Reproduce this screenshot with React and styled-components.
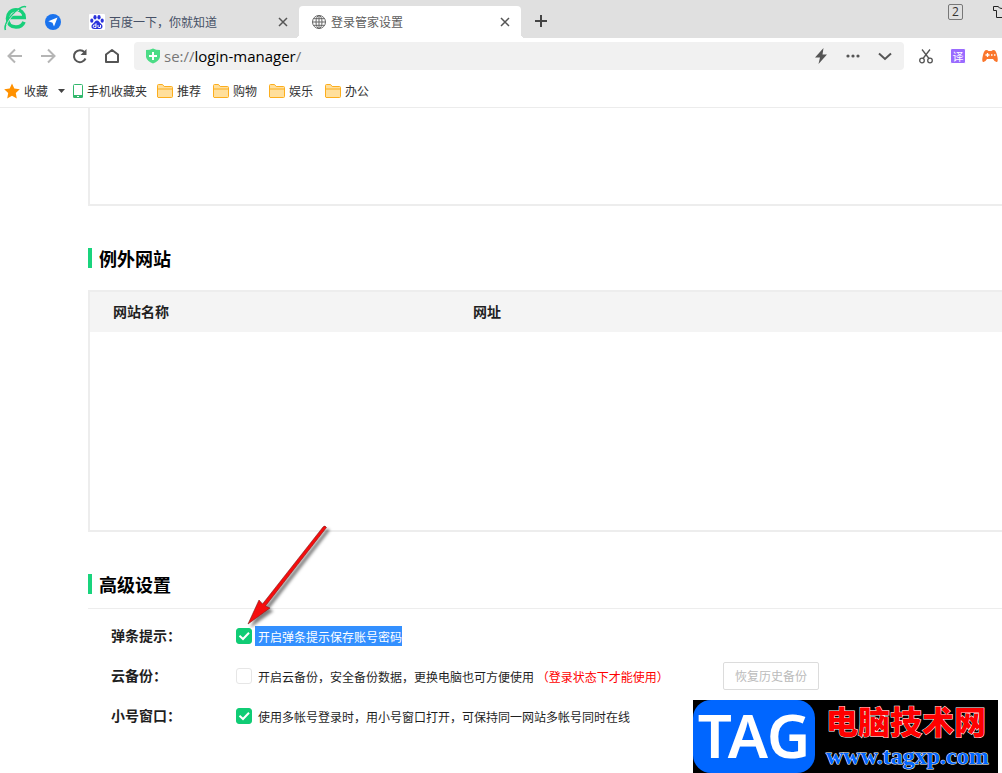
import React from "react";
import styled, { createGlobalStyle, css } from "styled-components";

const GlobalStyle = createGlobalStyle`
  * { box-sizing: border-box; }
  body {
    margin: 0;
    background: #fff;
    color: #1f1f1f;
    font: 12px/20px "Noto Sans CJK SC", sans-serif;
  }
  button, input { font: inherit; margin: 0; }
`;

const Page = styled.div`
  position: relative;
  display: flex;
  flex-direction: column;
  min-height: 100vh;
  overflow: hidden;
`;

/* Tab strip */
const TabStrip = styled.header`
  display: flex;
  align-items: flex-end;
  height: 38px;
  background: #e0e0e0;
`;

const Brand = styled.div`
  display: flex;
  flex: none;
  align-items: center;
  gap: 17px;
  width: 77px;
  height: 33px;
  padding-left: 4px;
  svg:first-child { align-self: flex-start; }
`;

const Tab = styled.div`
  position: relative;
  display: flex;
  align-items: center;
  flex: 0 1 222px;
  min-width: 0;
  height: 32px;
  padding: 0 8px 0 12px;
  color: #465066;
  ${(p) =>
    p.$active &&
    css`
      background: #fff;
      color: #5c5c5c;
      border-radius: 4px 4px 0 0;
      &::before,
      &::after {
        content: "";
        position: absolute;
        bottom: 0;
        width: 4px;
        height: 4px;
      }
      &::before {
        right: 100%;
        background: radial-gradient(circle at 0 0, #e0e0e0 4px, #fff 4px);
      }
      &::after {
        left: 100%;
        background: radial-gradient(circle at 100% 0, #e0e0e0 4px, #fff 4px);
      }
    `}
`;

const TabTitle = styled.span`
  flex: 1;
  padding-left: 4px;
  overflow: hidden;
  white-space: nowrap;
`;

const IconButton = styled.button`
  display: grid;
  place-items: center;
  flex: none;
  width: ${(p) => p.$width || 16}px;
  height: ${(p) => p.$height || 16}px;
  padding: 0;
  border: 0;
  background: none;
  color: ${(p) => p.$color || "#555"};
`;

const StripActions = styled.div`
  display: flex;
  align-self: flex-start;
  flex: none;
  gap: 30px;
  margin-left: auto;
  padding-top: 4px;
`;

const WindowCount = styled.button`
  width: 15px;
  height: 16px;
  padding: 0;
  border: 1px solid #777;
  border-radius: 2px;
  background: none;
  color: #333;
  font: 12px/14px "Open Sans", sans-serif;
`;

/* Address row */
const Toolbar = styled.nav`
  display: flex;
  align-items: center;
  height: 36px;
  padding-right: 4px;
`;

const NavButtons = styled.div`
  display: flex;
  gap: 16px;
  padding-left: 7px;
  margin-right: 14px;
`;

const AddressBar = styled.div`
  display: flex;
  flex: 1;
  align-items: center;
  min-width: 0;
  height: 28px;
  padding: 0 11px;
  border-radius: 4px;
  background: #f1f1f1;
  font: 15px/20px "Open Sans", sans-serif;
  color: #777;
`;

const Address = styled.div`
  display: flex;
  flex: 1;
  min-width: 0;
  padding-left: 3px;
`;

const AddressInput = styled.input`
  field-sizing: content;
  padding: 0;
  border: 0;
  outline: 0;
  background: none;
  color: #000;
`;

const AddressActions = styled.div`
  display: flex;
  gap: 16px;
`;

const Extensions = styled.div`
  display: flex;
  gap: 16px;
  padding-left: 14px;
`;

const Translate = styled.button`
  width: 16px;
  height: 16px;
  padding: 0;
  border: 1px solid #fff;
  border-radius: 2px;
  background: #9a6bff;
  color: #fff;
  font-size: 11px;
  line-height: 14px;
`;

/* Bookmarks */
const Bookmarks = styled.nav`
  display: flex;
  align-items: center;
  height: 34px;
  padding: 0 4px;
  border-bottom: 1px solid #ececec;
`;

const Bookmark = styled.a`
  display: flex;
  align-items: center;
  flex: none;
  gap: 4px;
  margin-right: ${(p) => p.$after || 12}px;
  color: #333;
  text-decoration: none;
`;

/* Settings page */
const Content = styled.main`
  flex: 1;
  padding-left: 88px;
`;

const Panel = styled.section`
  min-height: ${(p) => p.$height}px;
  border: solid #ededed;
  border-width: ${(p) => (p.$continued ? "0 0 2px 2px" : "2px 0 2px 2px")};
`;

const Heading = styled.h2`
  margin: 42px 0 ${(p) => p.$after}px;
  padding-left: 7px;
  border-left: 4px solid #19d47d;
  color: #000;
  font-size: 18px;
  line-height: 20px;
  font-weight: 700;
`;

const SiteTable = styled.table`
  width: 100%;
  table-layout: fixed;
  border-collapse: collapse;
`;

const HeadCell = styled.th`
  width: ${(p) => p.$width};
  height: 40px;
  padding: 0 0 2px 23px;
  background: #f4f4f4;
  font-size: 14px;
  font-weight: 700;
  text-align: left;
`;

const Options = styled.section`
  padding: 7px 0 37px 23px;
  border-top: 1px solid #ededed;
`;

const OptionRow = styled.div`
  display: flex;
  align-items: center;
  height: 40px;
`;

const OptionName = styled.span`
  flex: none;
  width: 125px;
  padding-bottom: 2px;
  font-size: 14px;
  font-weight: 700;
`;

const OptionLabel = styled.label`
  display: flex;
  align-items: center;
  flex: none;
  gap: 3px;
  width: 487px;
`;

const CheckBox = styled.span`
  position: relative;
  display: grid;
  flex: none;
  svg { grid-area: 1 / 1; pointer-events: none; }
`;

const CheckInput = styled.input`
  grid-area: 1 / 1;
  appearance: none;
  width: 16px;
  height: 16px;
  border: 1px solid #e6e6e6;
  border-radius: 3px;
  background: #fff;
  &:checked { background: #10cc75; border-color: #10cc75; }
  &:not(:checked) + svg { display: none; }
`;

const OptionText = styled.span`
  height: 20px;
  padding-left: 3px;
  line-height: 22px;
  white-space: pre;
  ${(p) => p.$selected && "background: #3390ff; color: #fff;"}
`;

const Warning = styled.span`
  color: #f00;
`;

const RestoreButton = styled.button`
  flex: none;
  width: 96px;
  height: 28px;
  padding: 0;
  border: 1px solid #dcdcdc;
  border-radius: 2px;
  background: #fff;
  color: #bbb;
`;

const Pointer = styled.svg`
  position: absolute;
  left: 8px;
  bottom: 16px;
`;

/* Site badge laid over the corner of the page */
const Badge = styled.aside`
  position: absolute;
  right: 4px;
  bottom: 0;
  display: flex;
  width: 305px;
  height: 73px;
  background: #000;
`;

const BadgeMark = styled.div`
  display: flex;
  align-items: center;
  justify-content: center;
  width: 122px;
  padding-bottom: 4px;
  border-radius: 18px;
  background: #06f;
  color: #fff;
  font: 600 60px/60px "Noto Sans", sans-serif;
`;

const BadgeText = styled.div`
  display: flex;
  flex-direction: column;
  padding-left: 11px;
  white-space: nowrap;
  paint-order: stroke fill;
  -webkit-text-stroke: 1px #fff;
`;

const BadgeTitle = styled.span`
  color: #f00;
  font-size: 32px;
  line-height: 40px;
  font-weight: 900;
`;

const BadgeUrl = styled.span`
  color: #06f;
  font: 700 24px/32px "Liberation Serif", serif;
`;

const Line = ({ children, size = 16, width = 2, ...rest }) => (
  <svg width={size} height={size} viewBox="0 0 16 16" fill="none" stroke="currentColor" strokeWidth={width} {...rest}>
    {children}
  </svg>
);

const BrowserLogo = () => (
  <svg width="24" height="26" viewBox="0 0 24 26" fill="none">
    <path d="M6 12.500H20.200C20 7.500 16.500 4.800 12 4.800 7 4.800 3.500 8.500 3.500 13.500 3.500 18.500 7 22 12 22 15.800 22 18.800 20 20 16.800" stroke="#17cf7a" strokeWidth="3.600" />
    <path d="M1.500 25C0 22 2.500 15.500 8.500 9.500 14 4 19.500 .5 22 2" stroke="#17cf7a" strokeWidth="1.600" />
    <path d="M2.500 20C5 14 9 9.500 15 5" stroke="#e0e0e0" strokeWidth=".9" />
  </svg>
);

const PlaneLogo = () => (
  <svg width="16" height="16" viewBox="0 0 16 16">
    <circle cx="8" cy="8" r="8" fill="#1a73ee" />
    <path d="M12.500 3.500 9 12.500 7.500 8.700 3.300 7.200Z" fill="#fff" />
  </svg>
);

const PawLogo = () => (
  <svg width="16" height="16" viewBox="0 0 16 16">
    <rect width="16" height="16" rx="1" fill="#fff" />
    <g fill="#2a32dc">
      <ellipse cx="2.800" cy="6.700" rx="1.600" ry="2.100" />
      <ellipse cx="6" cy="3.200" rx="1.600" ry="2.200" />
      <ellipse cx="10" cy="3.200" rx="1.600" ry="2.200" />
      <ellipse cx="13.200" cy="6.700" rx="1.600" ry="2.100" />
      <path d="M8 6.500C10 6.500 10.500 8.700 12.300 10 14.500 11.800 13.500 15 11 15H5C2.500 15 1.500 11.800 3.700 10 5.500 8.700 6 6.500 8 6.500Z" />
    </g>
    <path d="M7 9.300V13.500H5.500A1 1 0 0 1 5.500 11H7M9 11V12.700Q9 13.500 10 13.500H11.500V11" fill="none" stroke="#fff" />
  </svg>
);

const GlobeIcon = () => (
  <Line width={1} color="#666">
    <circle cx="8" cy="8" r="6.500" />
    <ellipse cx="8" cy="8" rx="3" ry="6.500" />
    <path d="M8 1.500V14.500M1.500 8H14.500M2.500 4.700H13.500M2.500 11.300H13.500" />
  </Line>
);

const CloseIcon = () => (
  <Line width={1.5}>
    <path d="M4 4 12 12M12 4 4 12" />
  </Line>
);

const StarIcon = () => (
  <svg width="16" height="16" viewBox="0 0 16 16">
    <path d="M8 .5 10.300 5.500 15.800 6.200 11.800 10 12.800 15.500 8 12.800 3.200 15.500 4.200 10 .2 6.200 5.700 5.500Z" fill="#ff9100" />
  </svg>
);

const PhoneIcon = () => (
  <svg width="10" height="14" viewBox="0 0 10 14">
    <rect x=".5" y=".5" width="9" height="13" rx="1" fill="#fff" stroke="#32b86c" />
    <path d="M0 11H10V13L9 14H1L0 13Z" fill="#32b86c" />
    <path d="M4 12.500H6" stroke="#fff" />
  </svg>
);

const FolderIcon = () => (
  <svg width="16" height="14" viewBox="0 0 16 14">
    <path d="M.5 13V1.500Q.5 .5 1.500 .5H5.500L7.200 2.500H14.500Q15.500 2.500 15.500 3.500V12.500Q15.500 13.500 14.500 13.500H1Z" fill="#ffdf9c" stroke="#fcae1e" />
    <path d="M1 5H15" stroke="#fcae1e" />
  </svg>
);

const ArrowPointer = () => (
  <Pointer width="92" height="106" viewBox="0 0 92 106" aria-hidden="true">
    <defs>
      <filter id="pointer-shadow" x="-20%" y="-20%" width="150%" height="150%">
        <feDropShadow dx="3" dy="3" stdDeviation="1.500" floodColor="#000" floodOpacity=".5" />
      </filter>
    </defs>
    <path
      d="M4 102 15 78 18.500 82 79 5Q81 3 82.500 5.500L21.500 84 26 86Z"
      fill="#f50808" stroke="#7b2020" strokeWidth=".6" filter="url(#pointer-shadow)"
    />
  </Pointer>
);

const Check = ({ id, checked, children }) => (
  <CheckBox>
    <CheckInput type="checkbox" id={id} defaultChecked={checked} />
    <Line color="#fff">
      <path d="M3.500 7.800 7 11 13 4.800" />
    </Line>
    {children}
  </CheckBox>
);

const folders = ["推荐", "购物", "娱乐", "办公"];

export default function App() {
  return (
    <>
      <GlobalStyle />
      <Page>
        <TabStrip>
          <Brand>
            <BrowserLogo />
            <PlaneLogo />
          </Brand>
          <Tab>
            <PawLogo />
            <TabTitle>百度一下，你就知道</TabTitle>
            <IconButton aria-label="关闭标签"><CloseIcon /></IconButton>
          </Tab>
          <Tab $active>
            <GlobeIcon />
            <TabTitle>登录管家设置</TabTitle>
            <IconButton aria-label="关闭标签"><CloseIcon /></IconButton>
          </Tab>
          <IconButton $width={40} $height={34} $color="#444" aria-label="新建标签">
            <Line><path d="M2 8H14M8 2V14" /></Line>
          </IconButton>
          <StripActions>
            <WindowCount>2</WindowCount>
            <IconButton $width={9} $color="#222" aria-label="皮肤">
              <svg width="9" height="16" viewBox="0 0 9 16" fill="none" stroke="currentColor">
                <path d="M5.500 2.500H.5V6.500H3.500V13.500H9M5 2.500Q6 4.500 9 4.500" />
              </svg>
            </IconButton>
          </StripActions>
        </TabStrip>

        <Toolbar>
          <NavButtons>
            <IconButton $color="#b5b5b5" aria-label="后退">
              <Line><path d="M15 8H2M8 1.500 1.500 8 8 14.500" /></Line>
            </IconButton>
            <IconButton $width={17} $color="#b5b5b5" aria-label="前进">
              <Line><path d="M1 8H14M8 1.500 14.500 8 8 14.500" /></Line>
            </IconButton>
            <IconButton aria-label="刷新">
              <Line>
                <path d="M13.500 10.500A6 6 0 1 1 12.500 4.200" />
                <path d="M14.500 1V7H8.500Z" fill="currentColor" stroke="none" />
              </Line>
            </IconButton>
            <IconButton aria-label="主页">
              <Line><path d="M2 14V6.500L8 2 14 6.500V14Z" strokeLinejoin="round" /></Line>
            </IconButton>
          </NavButtons>
          <AddressBar>
            <svg width="16" height="16" viewBox="0 0 16 16">
              <path d="M1 2Q5 2 8 .5 11 2 15 2V9Q14 13 8 15.500 2 13 1 9Z" fill="#4bdc86" />
              <path d="M8 4V12M4 8H12" stroke="#fff" strokeWidth="2" />
            </svg>
            <Address>
              <span>se://</span>
              <AddressInput aria-label="地址" defaultValue="login-manager" />
              <span>/</span>
            </Address>
            <AddressActions>
              <IconButton aria-label="极速模式">
                <svg width="16" height="16" viewBox="0 0 16 16"><path d="M10.500 0 2 9.500H7L5.500 16 14 6.500H9.500Z" fill="currentColor" /></svg>
              </IconButton>
              <IconButton aria-label="更多">
                <svg width="16" height="16" viewBox="0 0 16 16" fill="currentColor">
                  <circle cx="3" cy="8" r="1.600" /><circle cx="8" cy="8" r="1.600" /><circle cx="13" cy="8" r="1.600" />
                </svg>
              </IconButton>
              <IconButton aria-label="展开">
                <Line><path d="M2 5.500 8 11 14 5.500" /></Line>
              </IconButton>
            </AddressActions>
          </AddressBar>
          <Extensions>
            <IconButton aria-label="截图">
              <Line width={1.3}>
                <circle cx="4" cy="12.500" r="2.300" /><circle cx="12" cy="12.500" r="2.300" />
                <path d="M4 1.500 11 10.500M12 1.500 5 10.500" />
              </Line>
            </IconButton>
            <Translate>译</Translate>
            <IconButton $color="#fa762c" aria-label="游戏">
              <svg width="16" height="16" viewBox="0 0 16 16">
                <path d="M4 2Q6 2 6.500 3H9.500Q10 2 12 2 14 2.500 15 7 16.500 13 15 14 13 14.500 11 11H5Q3 14.500 1 14-.5 13 1 7 2 2.500 4 2Z" fill="currentColor" />
                <path d="M5.500 5V9M3.500 7H7.500M9 7H10.500M12 7H13.500" stroke="#fff" strokeWidth="1.300" />
              </svg>
            </IconButton>
          </Extensions>
        </Toolbar>

        <Bookmarks>
          <Bookmark href="#favorites" $after={10}>
            <StarIcon />
            收藏
          </Bookmark>
          <Bookmark href="#mobile" $after={10}>
            <svg width="7" height="4" viewBox="0 0 7 4"><path d="M0 0H7L3.500 4Z" fill="#444" /></svg>
            <span />
            <PhoneIcon />
            手机收藏夹
          </Bookmark>
          {folders.map((name) => (
            <Bookmark key={name} href="#folder">
              <FolderIcon />
              {name}
            </Bookmark>
          ))}
        </Bookmarks>

        <Content>
          <Panel $continued $height={98} />
          <Heading $after={22}>例外网站</Heading>
          <Panel $height={242}>
            <SiteTable>
              <thead>
                <tr>
                  <HeadCell $width="360px">网站名称</HeadCell>
                  <HeadCell $width="auto">网址</HeadCell>
                </tr>
              </thead>
            </SiteTable>
          </Panel>
          <Heading $after={14}>高级设置</Heading>
          <Options>
            <OptionRow>
              <OptionName>弹条提示：</OptionName>
              <OptionLabel htmlFor="prompt">
                <Check id="prompt" checked><ArrowPointer /></Check>
                <OptionText $selected>开启弹条提示保存账号密码</OptionText>
              </OptionLabel>
            </OptionRow>
            <OptionRow>
              <OptionName>云备份：</OptionName>
              <OptionLabel htmlFor="backup">
                <Check id="backup" />
                <OptionText>
                  开启云备份，安全备份数据，更换电脑也可方便使用{" "}
                  <Warning>（登录状态下才能使用）</Warning>
                </OptionText>
              </OptionLabel>
              <RestoreButton>恢复历史备份</RestoreButton>
            </OptionRow>
            <OptionRow>
              <OptionName>小号窗口：</OptionName>
              <OptionLabel htmlFor="window">
                <Check id="window" checked />
                <OptionText>使用多帐号登录时，用小号窗口打开，可保持同一网站多帐号同时在线</OptionText>
              </OptionLabel>
            </OptionRow>
          </Options>
        </Content>

        <Badge>
          <BadgeMark>TAG</BadgeMark>
          <BadgeText>
            <BadgeTitle>电脑技术网</BadgeTitle>
            <BadgeUrl>www.tagxp.com</BadgeUrl>
          </BadgeText>
        </Badge>
      </Page>
    </>
  );
}
